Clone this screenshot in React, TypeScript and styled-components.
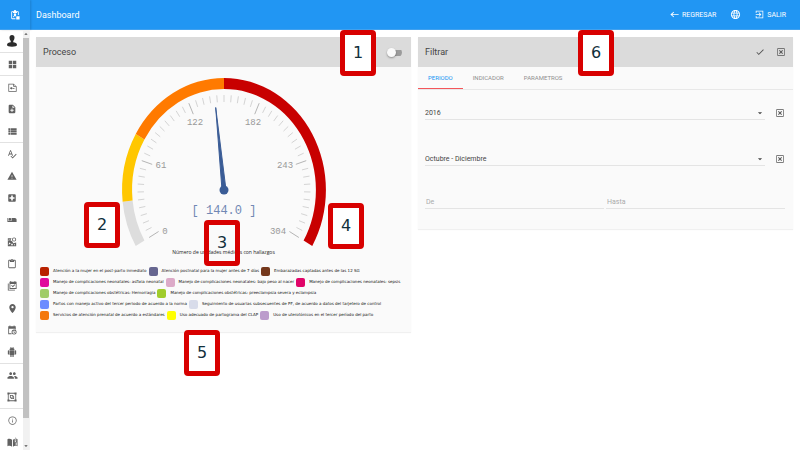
import React from "react";
import styled, { createGlobalStyle } from "styled-components";
import {
  MdAirlineSeatIndividualSuite,
  MdArrowDropDown,
  MdArrowDropUp,
  MdCheck,
  MdContentPaste,
  MdLanguage,
  MdLocalHospital,
  MdLocationOn,
  MdNoteAdd,
  MdPeople,
  MdSpellcheck,
  MdViewList,
  MdWarning,
} from "react-icons/md";

const GlobalStyle = createGlobalStyle`
  *, *::before, *::after { box-sizing: border-box; }
  body {
    margin: 0;
    background: #fff;
    color: #444;
    font-family: "Roboto", "Liberation Sans", sans-serif;
    font-size: 7px;
  }
  button, input, select { font: inherit; color: inherit; }
`;

const Page = styled.div`
  position: relative;
  display: flex;
  flex-direction: column;
  height: 100vh;
  overflow: hidden;
`;

const TopBar = styled.header`
  display: flex;
  flex: none;
  align-items: center;
  height: 30px;
  background: #2196f3;
  color: #fff;
  border-bottom: 1px solid #42a1ee;
`;

const Brand = styled.div`
  display: flex;
  align-items: center;
  justify-content: center;
  width: 30px;
  height: 30px;
  box-shadow: 1px 0 2px rgba(0, 0, 0, 0.15);
`;

const PageTitle = styled.h1`
  flex: 1;
  margin: 0;
  padding-left: 6px;
  font-size: 9px;
  font-weight: 400;
`;

const Actions = styled.nav`
  display: flex;
  align-items: center;
  gap: 14px;
  padding-right: 14px;
`;

const BarLink = styled.a`
  display: flex;
  align-items: center;
  gap: 3px;
  color: #fff;
  font-size: 7px;
  text-decoration: none;
`;

const Main = styled.div`
  display: flex;
  flex: 1;
  min-height: 0;
`;

const SideBar = styled.aside`
  display: flex;
  flex: none;
  width: 30px;
  overflow: hidden;
  border-right: 1px solid #f3f3f3;
`;

const SideNav = styled.nav`
  display: flex;
  flex-direction: column;
  width: 23px;
`;

const Divider = styled.hr`
  flex: none;
  width: 100%;
  height: 1px;
  margin: 0;
  border: 0;
  background: #e2e2e2;
`;

const SideLink = styled.a<{ $dark?: boolean }>`
  display: flex;
  flex: none;
  align-items: center;
  justify-content: center;
  height: 22px;
  padding-left: 1px;
  color: ${(p) => (p.$dark ? "#2c2c2c" : "#616161")};
`;

const ScrollRail = styled.div`
  display: flex;
  flex-direction: column;
  align-items: center;
  width: 6px;
  background: #f1f1f1;
  color: #505050;
`;

const ScrollThumb = styled.div`
  flex: 1;
  width: 6px;
  background: #c1c1c1;
`;

const ScrollGap = styled.div`
  height: 24px;
`;

const Content = styled.main`
  display: grid;
  flex: 1;
  grid-template-columns: minmax(0, 1fr) minmax(0, 1fr);
  align-items: start;
  gap: 7px;
  padding: 7px 7px 7px 6px;
`;

const Panel = styled.section`
  background: #fafafa;
  box-shadow: 0 1px 1px rgba(0, 0, 0, 0.06);
`;

const PanelHead = styled.div`
  display: flex;
  align-items: center;
  height: 30px;
  padding: 0 7px;
  background: #dbdbdb;
`;

const PanelTitle = styled.h2`
  flex: 1;
  margin: 0;
  font-size: 9px;
  font-weight: 400;
`;

const Switch = styled.input`
  display: flex;
  align-items: center;
  width: 15px;
  height: 9px;
  margin: 0 2px 0 0;
  appearance: none;
  background: linear-gradient(#9b9b9b, #9b9b9b) 3px 2px / 12px 6px no-repeat;
  border-radius: 5px;

  &::before {
    content: "";
    width: 9px;
    height: 9px;
    border-radius: 50%;
    background: #fafafa;
    box-shadow: 0 1px 2px rgba(0, 0, 0, 0.35);
  }
`;

const GaugeBox = styled.figure`
  display: flex;
  flex-direction: column;
  align-items: center;
  margin: 0;
  padding-top: 4px;
`;

const GaugeCaption = styled.figcaption`
  font-family: "Open Sans", sans-serif;
  font-size: 5px;
  line-height: 8px;
  color: #222;
`;

const Legend = styled.div`
  display: flex;
  flex-direction: column;
  gap: 2px;
  padding: 11px 4px 12px;
`;

const LegendRow = styled.ul`
  display: flex;
  gap: 2px;
  height: 9px;
  margin: 0;
  padding: 0;
  list-style: none;
`;

const LegendItem = styled.li`
  display: flex;
  gap: 4px;
  font-family: "DejaVu Sans", sans-serif;
  font-size: 4px;
  line-height: 7px;
  color: #111;
  white-space: nowrap;
`;

const Swatch = styled.span<{ $color: string }>`
  width: 9px;
  height: 9px;
  border-radius: 2px;
  background: ${(p) => p.$color};
`;

const IconButton = styled.button`
  display: flex;
  flex: none;
  align-items: center;
  justify-content: center;
  width: 10px;
  height: 10px;
  padding: 0;
  border: 0;
  background: none;
  color: #555;
`;

const HeadActions = styled.div`
  display: flex;
  gap: 11px;
`;

const Tabs = styled.div`
  display: flex;
  height: 23px;
  border-bottom: 1px solid #e8e8e8;
`;

const Tab = styled.button<{ $active?: boolean }>`
  height: 22px;
  padding: 0 10px;
  border: 0;
  border-bottom: 1px solid ${(p) => (p.$active ? "#f4565a" : "transparent")};
  background: none;
  color: ${(p) => (p.$active ? "#2196f3" : "#8f8f8f")};
  font-size: 6px;
`;

const Form = styled.form`
  display: flex;
  flex-direction: column;
  padding: 16px 8px 20px 7px;
`;

const SelectRow = styled.div`
  display: flex;
  align-items: center;
  gap: 10px;
  height: 14px;
  margin-bottom: 32px;
`;

const SelectField = styled.label`
  display: flex;
  flex: 1;
  align-items: center;
  height: 14px;
  border-bottom: 1px solid #e4e4e4;
`;

const Select = styled.select`
  flex: 1;
  padding: 0;
  border: 0;
  outline: 0;
  appearance: none;
  background: none;
  font-size: 7px;
`;

const RangeRow = styled.div`
  display: flex;
  gap: 2px;
`;

const RangeInput = styled.input`
  flex: 1;
  min-width: 0;
  height: 11px;
  padding: 0 1px 2px;
  border: 0;
  border-bottom: 1px solid #e4e4e4;
  outline: 0;
  background: none;
  font-size: 7px;
  line-height: 8px;

  &::placeholder { color: #aaa; opacity: 1; }
`;

const Marker = styled.div<{ $x: number; $y: number; $clear?: boolean }>`
  position: absolute;
  left: ${(p) => p.$x}px;
  top: ${(p) => p.$y}px;
  display: flex;
  align-items: center;
  justify-content: center;
  width: 36px;
  height: 46px;
  border: 5px solid #d80000;
  border-radius: 4px;
  background: ${(p) => (p.$clear ? "transparent" : "#fff")};
  color: #12303c;
  font-family: "DejaVu Sans", sans-serif;
  font-size: 16px;
  line-height: 20px;
`;

type GlyphProps = { d: string; size?: number };

const Glyph = ({ d, size = 10 }: GlyphProps) => (
  <svg width={size} height={size} viewBox="0 0 24 24" fill="currentColor" fillRule="evenodd" aria-hidden="true">
    <path d={d} />
  </svg>
);

const paths = {
  brand:
    "M19 3h-4a3 3 0 0 0-6 0H5a2 2 0 0 0-2 2v15a2 2 0 0 0 2 2h8v-2H5V5h2v2h10V5h2v7h2V5a2 2 0 0 0-2-2zM12 8a3 3 0 0 1 2 5l3 3-2 1-3-3-4 4-1-2 3-3a3 3 0 0 1 2-5zM15 15h8v8h-8z",
  user: "M12 0a5 5 0 0 1 5 5c0 3-1 5-2.500 7v2.500c4 .5 7.500 2 7.500 5.500 0 2-4 3.500-10 3.500S2 22 2 20c0-3.500 3.500-5 7.500-5.500V12C8 10 7 8 7 5a5 5 0 0 1 5-5z",
  grid: "M2 2h9v9H2zM13 2h9v9h-9zM2 13h9v9H2zM13 13h9v9h-9z",
  file: "M1 2h14l8 7v14H1zM3 4v17h18V10h-7V4zM16 5v3h4zM6 12h3v-2l4 4-4 4v-2H6zM14 13h3v3h-3z",
  modules:
    "M2 3h9l-3 5 5 3 2 4 7-2v9H2zM4 6v4l3-4zM5 13l-1 6 5-4zM12 15l-3 5h6zM17 16v4h3zM17 1a5 5 0 1 1 0 10 5 5 0 0 1 0-10zm0 2a3 3 0 1 0 0 6 3 3 0 0 0 0-6z",
  calendarCheck:
    "M6 2h2V0h2v2h8V0h2v2h3v17H6zM8 7v10h13V7zM2 6h2v15h15v2H2zM10 11l1.500-1.500 2.500 2.500 4-4 1.500 1.500L14 15z",
  calendarClock:
    "M3 3h3V1h2v2h8V1h2v2h3v8h-2V9H5v11h6v2H3zM17 11a6 6 0 1 1 0 12 6 6 0 0 1 0-12zm0 2a4 4 0 1 0 0 8 4 4 0 0 0 0-8zM16 14h1.500v3l2 1-.7 1.300L16 18z",
  android:
    "M6 18c0 .55.45 1 1 1h1v3.500a1.500 1.500 0 0 0 3 0V19h2v3.500a1.500 1.500 0 0 0 3 0V19h1c.55 0 1-.45 1-1V8H6zM3.500 8A1.500 1.500 0 0 0 2 9.500v7a1.500 1.500 0 0 0 3 0v-7A1.500 1.500 0 0 0 3.500 8zm17 0A1.500 1.500 0 0 0 19 9.500v7a1.500 1.500 0 0 0 3 0v-7A1.500 1.500 0 0 0 20.500 8zm-5-5.800 1.300-1.300-.7-.7-1.500 1.500a6 6 0 0 0-5.200 0L7.900.2l-.7.7 1.300 1.300A6 6 0 0 0 6 7h12a6 6 0 0 0-2.500-4.800zM10 5H9V4h1zm5 0h-1V4h1z",
  group:
    "M1 1h5v1h12V1h5v5h-1v12h1v5h-5v-1H6v1H1v-5h1V6H1zM4 6v12h2v2h12v-2h2V6h-2V4H6v2zM7 7h8v3h2v7h-7v-2H7zM9 9v4h4V9zM15 12v3h-3z",
  info: "M12 1a11 11 0 1 1 0 22 11 11 0 0 1 0-22zm0 2a9 9 0 1 0 0 18 9 9 0 0 0 0-18zM11 7h2v2h-2zM11 11h2v6h-2z",
  book: "M1 5c4-2 7-1 10 1v15c-3-2-6-2-10-1zM13 6l4-2v8l3-2V3l3 2v15c-4-1-7-1-10 1zM18 1h1v8h-1zM19 12v6h2v-6z",
  closeBox: "M1 1h22v22H1zM3 3v18h18V3zM6 8l2-2 4 4 4-4 2 2-4 4 4 4-2 2-4-4-4 4-2-2 4-4z",
  back: "M23 11H6l5-5-1.500-1.500L1 12l8.500 7.500L11 18l-5-5h17z",
  exit: "M2 2h20v20H2v-6h2v4h16V4H4v4H2zM11 6l6 6-6 6-1.500-1.500L13 13H2v-2h11L9.500 7.500z",
};

const navGroups: React.ReactNode[][] = [
  [<Glyph d={paths.user} size={12} />],
  [<Glyph d={paths.grid} size={9} />],
  [<Glyph d={paths.file} size={9} />, <MdNoteAdd size={10} />, <MdViewList size={11} />],
  [
    <MdSpellcheck size={10} />,
    <MdWarning size={10} />,
    <MdLocalHospital size={10} />,
    <MdAirlineSeatIndividualSuite size={10} />,
    <Glyph d={paths.modules} />,
    <MdContentPaste size={10} />,
    <Glyph d={paths.calendarCheck} />,
    <MdLocationOn size={11} />,
    <Glyph d={paths.calendarClock} />,
    <Glyph d={paths.android} />,
  ],
  [<MdPeople size={11} />, <Glyph d={paths.group} />],
  [<Glyph d={paths.info} size={9} />, <Glyph d={paths.book} size={11} />],
];

const navNames = [
  ["Usuario"],
  ["Dashboard"],
  ["Archivo", "Nuevo", "Lista"],
  ["Criterios", "Alertas", "Hospital", "Camas", "Módulos", "Formato", "Agenda", "Ubicación", "Horario", "Android"],
  ["Usuarios", "Grupos"],
  ["Información", "Manual"],
];

const CX = 105;
const CY = 119;
const RATIO = 0.91;

/* Point on the dial: fraction 0..1 along the 240 degree sweep, at a vertical radius r. */
const dial = (fraction: number, r: number): [number, number] => {
  const a = ((210 - fraction * 240) * Math.PI) / 180;
  return [CX + Math.cos(a) * r * RATIO, CY - Math.sin(a) * r];
};

const band = (from: number, to: number) => {
  const [outer, inner] = [112, 101];
  const [x1, y1] = dial(from, outer);
  const [x2, y2] = dial(to, outer);
  const [x3, y3] = dial(to, inner);
  const [x4, y4] = dial(from, inner);
  return `M${x1} ${y1}A${outer * RATIO} ${outer} 0 0 1 ${x2} ${y2}L${x3} ${y3}A${inner * RATIO} ${inner} 0 0 0 ${x4} ${y4}Z`;
};

const bands = [
  { from: 0, to: 0.1, color: "#dddddd" },
  { from: 0.1, to: 0.25, color: "#ffc700" },
  { from: 0.25, to: 0.5, color: "#ff7a00" },
  { from: 0.5, to: 1, color: "#c80000" },
];

const scale = [
  { text: "0", x: 46, y: 163 },
  { text: "61", x: 42, y: 97 },
  { text: "122", x: 76, y: 54 },
  { text: "182", x: 134, y: 54 },
  { text: "243", x: 166, y: 97 },
  { text: "304", x: 159, y: 163 },
];

const Gauge = () => {
  const [tx, ty] = dial(144 / 304, 83);
  return (
    <svg width="210" height="177" viewBox="0 0 210 177" role="img" aria-label="144.0 de 304">
      {bands.map((b) => (
        <path key={b.color} d={band(b.from, b.to)} fill={b.color} />
      ))}
      {Array.from({ length: 51 }, (_, i) => {
        const major = i % 10 === 0;
        const [x1, y1] = dial(i / 50, 95);
        const [x2, y2] = dial(i / 50, major ? 83 : 88);
        return <line key={i} x1={x1} y1={y1} x2={x2} y2={y2} stroke={major ? "#b5b5b5" : "#d4d4d4"} />;
      })}
      <g fontFamily="Liberation Mono, monospace" textAnchor="middle">
        {scale.map((s) => (
          <text key={s.text} x={s.x} y={s.y} fontSize="9" fill="#999">
            {s.text}
          </text>
        ))}
        <text x={CX} y="143" fontSize="12" fill="#7188b4">
          [ 144.0 ]
        </text>
      </g>
      <path d={`M${tx} ${ty}L${CX + 2} ${CY}L${CX - 2} ${CY}Z`} fill="#3a5c96" stroke="#3a5c96" />
      <circle cx={CX} cy={CY} r="4.500" fill="#3a5c96" />
    </svg>
  );
};

const legend = [
  [
    ["#b82200", "Atención a la mujer en el post-parto inmediato"],
    ["#666690", "Atención postnatal para la mujer antes de 7 días"],
    ["#74381c", "Embarazadas captadas antes de las 12 SG"],
  ],
  [
    ["#e00a9c", "Manejo de complicaciones neonatales: asfixia neonatal"],
    ["#dcaac8", "Manejo de complicaciones neonatales: bajo peso al nacer"],
    ["#e00468", "Manejo de complicaciones neonatales: sepsis"],
  ],
  [
    ["#a0cc68", "Manejo de complicaciones obstétricas: Hemorragia"],
    ["#a0cc2c", "Manejo de complicaciones obstétricas: preeclampsia severa y eclampsia"],
  ],
  [
    ["#6c8cff", "Partos con manejo activo del tercer periodo de acuerdo a la norma"],
    ["#d8dcea", "Seguimiento de usuarias subsecuentes de PF, de acuerdo a datos del tarjetero de control"],
  ],
  [
    ["#f4780c", "Servicios de atención prenatal de acuerdo a estándares"],
    ["#ffff00", "Uso adecuado de partograma del CLAP"],
    ["#bc9ccc", "Uso de uterotónicos en el tercer período del parto"],
  ],
];

const markers = [
  { n: 1, x: 340, y: 30 },
  { n: 2, x: 84, y: 202 },
  { n: 3, x: 204, y: 220, clear: true },
  { n: 4, x: 328, y: 203 },
  { n: 5, x: 184, y: 330 },
  { n: 6, x: 578, y: 30 },
];

const FilterSelect = ({ name, value }: { name: string; value: string }) => (
  <SelectRow>
    <SelectField>
      <Select aria-label={name} defaultValue={value}>
        <option>{value}</option>
      </Select>
      <MdArrowDropDown size={10} />
    </SelectField>
    <IconButton type="button" aria-label={`Limpiar ${name}`}>
      <Glyph d={paths.closeBox} size={8} />
    </IconButton>
  </SelectRow>
);

export default function App() {
  return (
    <Page>
      <GlobalStyle />
      <TopBar>
        <Brand>
          <Glyph d={paths.brand} size={10} />
        </Brand>
        <PageTitle>Dashboard</PageTitle>
        <Actions>
          <BarLink href="#regresar">
            <Glyph d={paths.back} size={9} />
            REGRESAR
          </BarLink>
          <BarLink href="#idioma" aria-label="Idioma">
            <MdLanguage size={11} />
          </BarLink>
          <BarLink href="#salir">
            <Glyph d={paths.exit} size={9} />
            SALIR
          </BarLink>
        </Actions>
      </TopBar>
      <Main>
        <SideBar>
          <SideNav>
            {navGroups.map((group, g) => (
              <React.Fragment key={g}>
                {g > 0 && <Divider />}
                {group.map((icon, i) => (
                  <SideLink key={i} href="#seccion" aria-label={navNames[g][i]} $dark={g === 0}>
                    {icon}
                  </SideLink>
                ))}
              </React.Fragment>
            ))}
          </SideNav>
          <ScrollRail>
            <MdArrowDropUp size={8} />
            <ScrollThumb />
            <ScrollGap />
            <MdArrowDropDown size={8} />
          </ScrollRail>
        </SideBar>
        <Content>
          <Panel>
            <PanelHead>
              <PanelTitle>Proceso</PanelTitle>
              <Switch type="checkbox" role="switch" aria-label="Proceso" />
            </PanelHead>
            <GaugeBox>
              <Gauge />
              <GaugeCaption>Número de unidades médicas con hallazgos</GaugeCaption>
            </GaugeBox>
            <Legend>
              {legend.map((row, r) => (
                <LegendRow key={r}>
                  {row.map(([color, text]) => (
                    <LegendItem key={text}>
                      <Swatch $color={color} />
                      {text}
                    </LegendItem>
                  ))}
                </LegendRow>
              ))}
            </Legend>
          </Panel>
          <Panel>
            <PanelHead>
              <PanelTitle>Filtrar</PanelTitle>
              <HeadActions>
                <IconButton type="button" aria-label="Aplicar">
                  <MdCheck size={10} />
                </IconButton>
                <IconButton type="button" aria-label="Limpiar filtros">
                  <Glyph d={paths.closeBox} size={8} />
                </IconButton>
              </HeadActions>
            </PanelHead>
            <Tabs role="tablist">
              <Tab role="tab" aria-selected="true" $active>
                PERIODO
              </Tab>
              <Tab role="tab">INDICADOR</Tab>
              <Tab role="tab">PARAMETROS</Tab>
            </Tabs>
            <Form>
              <FilterSelect name="Año" value="2016" />
              <FilterSelect name="Bimestre" value="Octubre - Diciembre" />
              <RangeRow>
                <RangeInput type="text" aria-label="De" placeholder="De" />
                <RangeInput type="text" aria-label="Hasta" placeholder="Hasta" />
              </RangeRow>
            </Form>
          </Panel>
        </Content>
      </Main>
      {markers.map((m) => (
        <Marker key={m.n} $x={m.x} $y={m.y} $clear={m.clear}>
          {m.n}
        </Marker>
      ))}
    </Page>
  );
}
